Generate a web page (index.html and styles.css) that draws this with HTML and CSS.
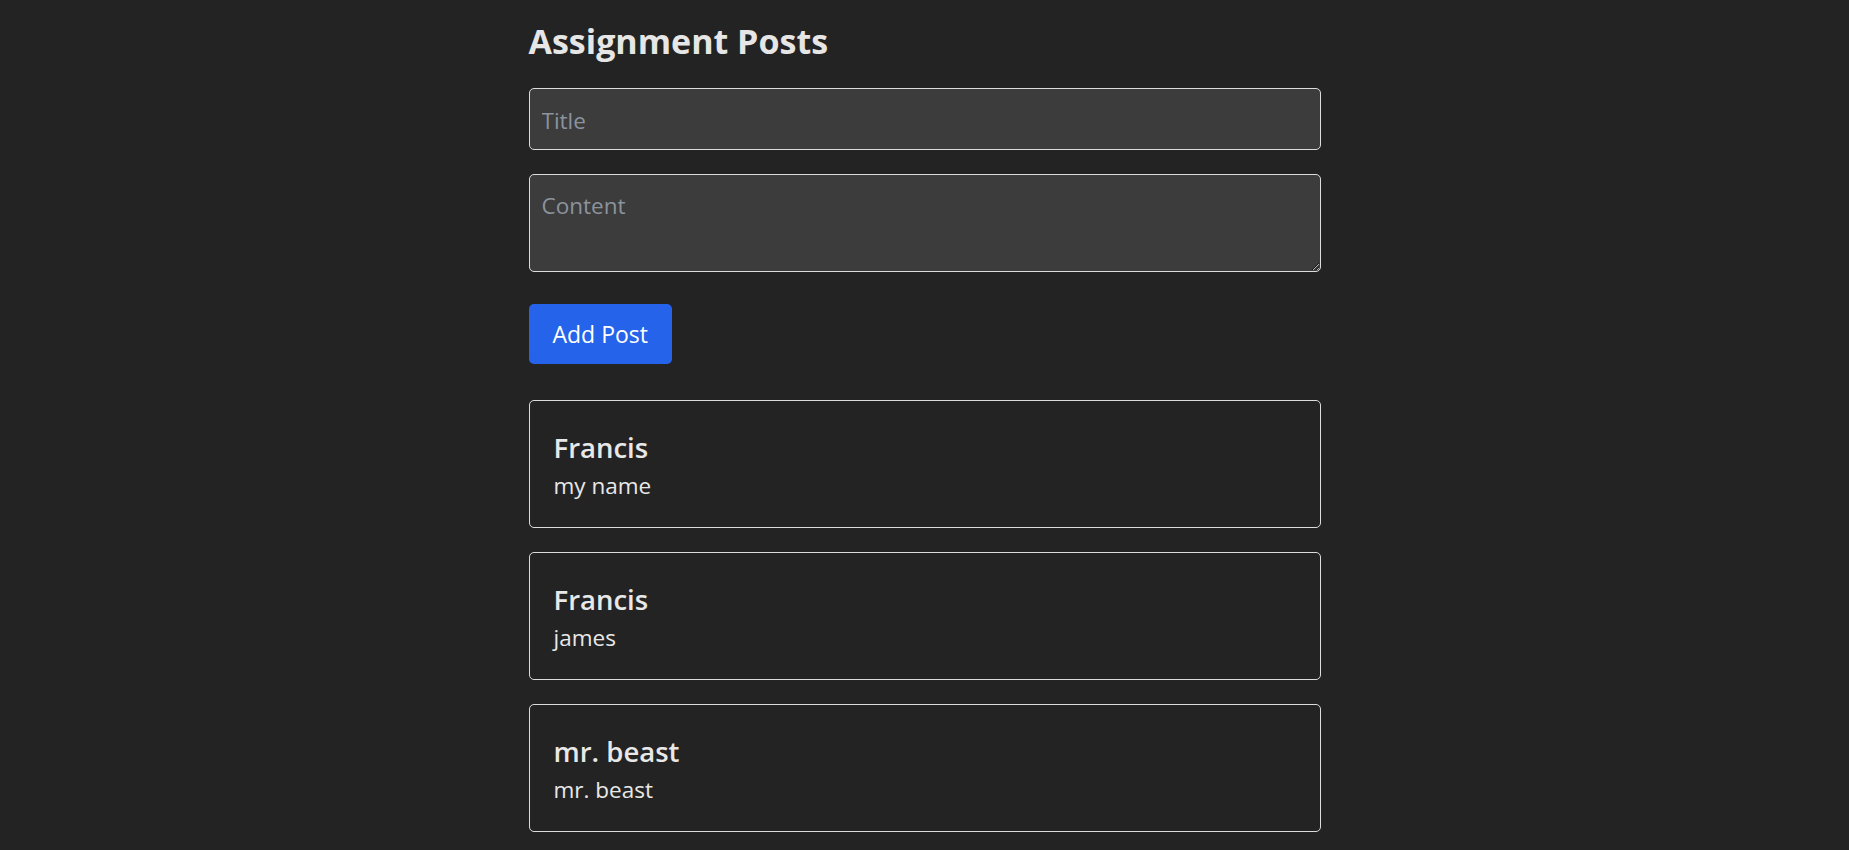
FILE: index.html
```html
<!DOCTYPE html>
<html lang="en">
<head>
<meta charset="utf-8">
<title>Assignment Posts</title>
<link rel="stylesheet" href="styles.css">
</head>
<body>
<main class="container">
  <h1 class="heading">Assignment Posts</h1>
  <form class="post-form">
    <input class="field field-title" type="text" placeholder="Title">
    <textarea class="field field-content" placeholder="Content"></textarea>
    <button class="btn-add" type="button">Add Post</button>
  </form>
  <section class="posts">
    <article class="post-card">
      <h2 class="post-title">Francis</h2>
      <p class="post-body">my name</p>
    </article>
    <article class="post-card">
      <h2 class="post-title">Francis</h2>
      <p class="post-body">james</p>
    </article>
    <article class="post-card">
      <h2 class="post-title">mr. beast</h2>
      <p class="post-body">mr. beast</p>
    </article>
  </section>
</main>
</body>
</html>
```

FILE: styles.css
```css
* { box-sizing: border-box; }

html, body {
  margin: 0;
  padding: 0;
  background: #232323;
  color: #e6e6e6;
  font-family: "Open Sans", "Noto Sans", sans-serif;
}

.container {
  width: 792px;
  margin: 0 auto;
  padding-top: 18px;
}

.heading {
  margin: 0;
  font-size: 34px;
  line-height: 46px;
  font-weight: 700;
  color: #e6e6e6;
}

.post-form {
  display: flex;
  flex-direction: column;
  align-items: flex-start;
  margin-top: 24px;
}

.field {
  display: block;
  width: 100%;
  height: 62px;
  background: #3c3c3c;
  border: 1px solid #dcdcdc;
  border-radius: 5px;
  color: #e6e6e6;
  font-family: inherit;
  font-size: 22.5px;
  line-height: 28px;
  padding: 17px 12px 15px;
  outline: none;
}

.field::placeholder {
  color: #8b939e;
  opacity: 1;
}

.field-content {
  height: 98px;
  margin-top: 24px;
  resize: vertical;
}

.btn-add {
  display: flex;
  align-items: center;
  margin-top: 32px;
  height: 60px;
  padding: 0 24px;
  background: #2563eb;
  color: #ffffff;
  border: none;
  border-radius: 5px;
  font-family: inherit;
  font-size: 23px;
  line-height: 28px;
  cursor: pointer;
}

.posts {
  display: flex;
  flex-direction: column;
  gap: 24px;
  margin-top: 36px;
}

.post-card {
  height: 128px;
  border: 1px solid #dcdcdc;
  border-radius: 5px;
  padding: 24px;
}

.post-title {
  margin: 0;
  font-size: 27.5px;
  line-height: 45px;
  font-weight: 600;
  color: #e8e8e8;
}

.post-body {
  margin: 1px 0 0;
  font-size: 22.5px;
  line-height: 30px;
  color: #e8e8e8;
}
```
